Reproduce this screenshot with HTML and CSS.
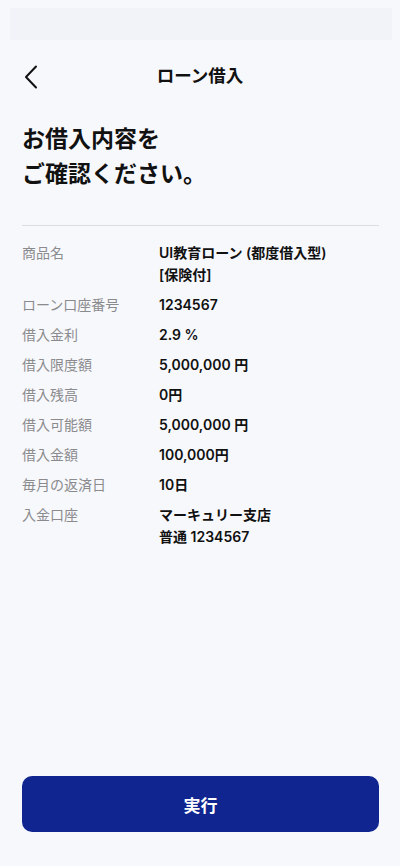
FILE: index.html
```html
<!DOCTYPE html>
<html lang="ja">
<head>
    <meta charset="UTF-8">
    <meta name="viewport" content="width=device-width, initial-scale=1.0">
    <title>ローン借入</title>
    <link rel="stylesheet" href="styles.css">
</head>
<body>
    <div class="status-bar"></div>

    <header class="header">
        <button class="back" type="button" aria-label="戻る">
            <svg width="14" height="24" viewBox="0 0 14 24">
                <path d="M12 1.5 L2 12 L12 22.5" fill="none" stroke="#111" stroke-width="2" stroke-linecap="round" stroke-linejoin="round"/>
            </svg>
        </button>
        <h1 class="title">ローン借入</h1>
    </header>

    <main class="content">
        <h2 class="lead">お借入内容を<br>ご確認ください。</h2>

        <dl class="details">
            <div class="row"><dt>商品名</dt><dd>UI教育ローン (都度借入型)<br>[保険付]</dd></div>
            <div class="row"><dt>ローン口座番号</dt><dd>1234567</dd></div>
            <div class="row"><dt>借入金利</dt><dd>2.9 %</dd></div>
            <div class="row"><dt>借入限度額</dt><dd>5,000,000 円</dd></div>
            <div class="row"><dt>借入残高</dt><dd>0円</dd></div>
            <div class="row"><dt>借入可能額</dt><dd>5,000,000 円</dd></div>
            <div class="row"><dt>借入金額</dt><dd>100,000円</dd></div>
            <div class="row"><dt>毎月の返済日</dt><dd>10日</dd></div>
            <div class="row"><dt>入金口座</dt><dd>マーキュリー支店<br>普通 1234567</dd></div>
        </dl>
    </main>

    <div class="actions">
        <button class="submit" type="button">実行</button>
    </div>
</body>
</html>
```

FILE: styles.css
```css
body {
    margin: 0;
    min-height: 100vh;
    display: flex;
    flex-direction: column;
    background-color: #f7f8fc;
    color: #111;
    font-family: Inter, "Noto Sans CJK JP", sans-serif;
}
.status-bar {
    height: 32px;
    margin: 8px 8px 0 10px;
    background-color: #f1f3f8;
}
.header {
    position: relative;
    height: 72px;
    display: flex;
    align-items: center;
    justify-content: center;
}
.back {
    position: absolute;
    left: 24px;
    top: 25px;
    padding: 0;
    border: none;
    background: none;
    display: flex;
    cursor: pointer;
}
.title {
    margin: 0;
    font-size: 17.5px;
    font-weight: 700;
    line-height: 24px;
}
.content {
    padding: 10px 21px 0 22px;
}
.lead {
    margin: 0;
    padding-bottom: 33px;
    border-bottom: 1px solid #dcdde0;
    font-size: 23px;
    font-weight: 700;
    line-height: 35px;
}
.details {
    margin: 16px 0 0;
    display: flex;
    flex-direction: column;
    gap: 8px;
    font-size: 14px;
    line-height: 22px;
}
.row {
    display: flex;
}
dt {
    width: 137px;
    flex-shrink: 0;
    color: #8b8b8e;
}
dd {
    margin: 0;
    font-weight: 600;
}
.actions {
    margin-top: auto;
    padding: 0 21px 34px 22px;
}
.submit {
    width: 100%;
    height: 56px;
    border: none;
    border-radius: 10px;
    background-color: #102590;
    color: #fff;
    font-family: inherit;
    font-size: 17px;
    font-weight: 700;
    cursor: pointer;
}
```
